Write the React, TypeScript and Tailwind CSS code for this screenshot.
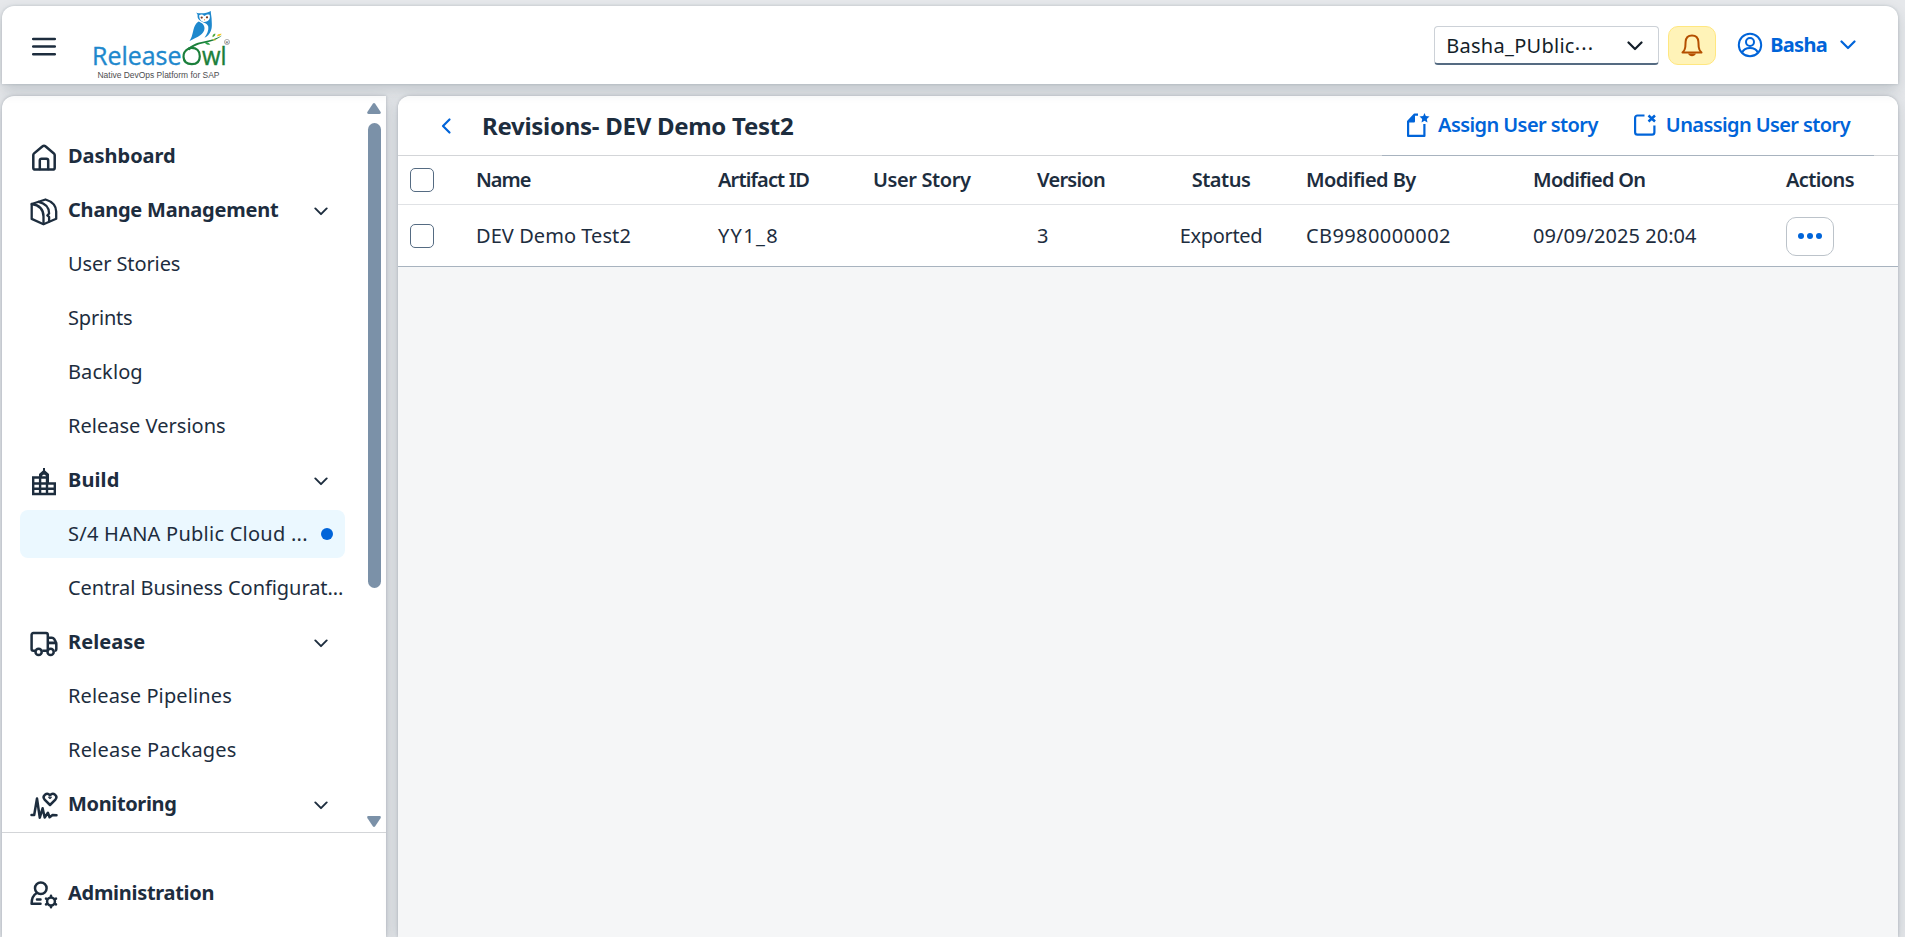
import type { ReactNode } from "react";

function Chevron({ className }: { className: string }) {
  return (
    <svg viewBox="0 0 16 10" fill="none" stroke="currentColor" strokeWidth="2.2" strokeLinecap="round" strokeLinejoin="round" className={className}>
      <path d="M1.5 1.5 8 8l6.500-6.500" />
    </svg>
  );
}

function Logo() {
  return (
    <svg width="144" height="72" viewBox="88 8 144 72" className="ml-8 shrink-0">
      <g fontFamily="'Open Sans', 'Noto Sans', sans-serif">
        <text x="92" y="64" fontSize="25" textLength="89.5" lengthAdjust="spacingAndGlyphs" fill="#1e88cd" stroke="#1e88cd" strokeWidth="0.35">Release</text>
        <text x="202" y="64" fontSize="25" textLength="24.500" lengthAdjust="spacingAndGlyphs" fill="#1b7f3b" stroke="#1b7f3b" strokeWidth="0.4">wl</text>
      </g>
      <path d="M188.5 47.6c-3.6 2-5.2 4.7-5 8.3.3 4.700 3.300 7.300 8.300 7.300 5.200 0 8-3 8-8 0-5.300-3.200-8.300-8.200-8.300-1.400 0-2.400.3-3.200.7z" fill="none" stroke="#1b7f3b" strokeWidth="2.200" />
      <path d="M187 48.500c4-4.500 9-6.600 15.500-7.800 8-1.500 14-3.200 19.500-6.200-5 4.400-11 6.300-18.500 7.800-6 1.200-10 3-14 7z" fill="#1b7f3b" />
      <path d="M204.500 41.200c2.400-.4 4.300.5 5.800 2.500-2.500.5-4.400-.4-5.800-2.500z" fill="#2aa04a" />
      <path d="M212.500 36.200c-.2-1.800.7-3 2.800-3.600.3 1.800-.6 3.200-2.800 3.600z" fill="#4aa83c" />
      <path d="M217 35.200c.4-1.800 2-2.600 4.600-2.400-.7 1.800-2.300 2.700-4.600 2.400zM212.500 38.600c1-.6 2.200-.6 3.400.3-1.200.8-2.500.7-3.400-.3z" fill="#f0c828" />
      <path d="M196 11.400c3.600 1.500 10.500 1.200 14.800-1.400-.1 2.600.7 5 .8 7.500.2 5.500.8 8.500-.8 12.500-1.300 3.300-3.700 5.500-6.300 6.800 2.600-3.500 4.300-7.500 3.800-11-.3-2.200-2-3.400-4.800-4.400-4.100-1.500-6.300-3.600-5.900-6.800.1-1.200-.5-2.300-1.600-3.200z" fill="#1e88cd" />
      <path d="M199.200 14.200c1.800-1.100 3.800-.9 5.200.9 1.500-1.600 3.400-2 5.200-1.300.9 3.300-.4 6.200-3.600 7-3.800.8-7-1.700-6.800-6.600z" fill="#fff" />
      <circle cx="201.700" cy="16.600" r="1.150" fill="#7a3a22" />
      <circle cx="207" cy="16.300" r="1.150" fill="#7a3a22" />
      <path d="M203.800 18.200h1.400l-.7 1.600z" fill="#e08a2a" />
      <path d="M198.500 20.400c3.600 1.300 6 3.400 6 6.800 0 5.600-6.500 8.800-15 12.700 2-2.600 2.600-5.400 3.500-9.100 1-4.300 2-8 5.500-10.400z" fill="#1e88cd" />
      <circle cx="227" cy="41" r="2.600" fill="none" stroke="#666" strokeWidth="0.500" />
      <text x="225.500" y="42.700" fontSize="4.400" fontFamily="'Liberation Sans', sans-serif" fill="#555">R</text>
      <text x="97.500" y="77" fontSize="8.300" textLength="122" lengthAdjust="spacingAndGlyphs" fontFamily="'Liberation Sans', Arial, sans-serif" fill="#4d4d4f">Native DevOps Platform for SAP</text>
    </svg>
  );
}

const iconClass = "w-7 h-7 shrink-0";

function HomeIcon() {
  return (
    <svg viewBox="0 0 28 28" fill="none" stroke="currentColor" strokeWidth="2.500" strokeLinejoin="round" strokeLinecap="round" className={iconClass}>
      <path d="M12.600 2.300 4.100 9.400c-.5.400-.8 1-.8 1.700V23.700c0 1.100.8 1.900 1.900 1.900h17.600c1.100 0 1.900-.8 1.900-1.900V11.100c0-.7-.3-1.300-.8-1.700l-8.500-7.100c-.8-.7-2-.7-2.800 0z" />
      <path d="M9.800 25v-8.600c0-1 .7-1.700 1.700-1.700h5c1 0 1.700.7 1.700 1.700V25" />
    </svg>
  );
}

function BoxesIcon() {
  return (
    <svg viewBox="0 0 28 28" fill="none" stroke="currentColor" strokeWidth="2.300" strokeLinejoin="round" strokeLinecap="round" className={iconClass}>
      <path d="M1.700 6 15.500 1.500c5.500 1.700 10.500 5 10.700 12v7.300L13.500 26.200 1.700 20.900z" />
      <path d="M1.700 6c6.500 1 11.800 4.500 11.800 12.500v7.500" />
      <path d="M8.500 3.900c6 1.300 10.500 5 10.600 11.500l-1.800 2 1.800 1.500v4.500" />
    </svg>
  );
}

function BuildingIcon() {
  return (
    <svg viewBox="0 0 28 28" fill="none" stroke="currentColor" strokeWidth="2.400" className={iconClass}>
      <path d="M3.200 26.700V9.500H17v17.200M17 15.500h7.800v11.200M2 26h24M3 15.500h14M3 20.800h22M10.100 9.500V26" />
      <path d="M9 9.500V6L13 2.500V-.5h2v3L19 6v9h-2V9.500z" fill="currentColor" stroke="none" />
      <path d="M12 8.300c0-2.200 4-2.200 4 0z" fill="#fff" stroke="none" />
    </svg>
  );
}

function TruckIcon() {
  return (
    <svg viewBox="0 0 28 28" fill="none" stroke="currentColor" strokeWidth="2.500" strokeLinejoin="round" className={iconClass}>
      <path d="M5 20.700H3.300c-1 0-1.700-.7-1.700-1.700V4.800c0-1 .7-1.700 1.700-1.700h12.800c1 0 1.700.7 1.700 1.700v15.200M12.300 20.700h4.700" />
      <path d="M17.800 7.700h4.100c1 0 1.700.4 2.200 1.200l1.800 3.200c.3.500.4 1 .4 1.600v5.300c0 1-.7 1.700-1.700 1.700" />
      <path d="M18.500 12.900h7.500" strokeWidth="2.800" />
      <circle cx="8.600" cy="21.900" r="3.100" />
      <circle cx="20.600" cy="21.900" r="3.100" />
    </svg>
  );
}

function MonitorIcon() {
  return (
    <svg viewBox="0 0 28 28" fill="none" stroke="currentColor" strokeWidth="2.500" strokeLinejoin="round" strokeLinecap="round" className={iconClass}>
      <path d="M1.500 23H4.200L7 6.500l2.800 19.200 2.800-9.400 2.100 9.200 3.200-4.700 1.700 4.500 3-2.300 3.900.2" />
      <path d="M20 13 14.600 7.600c-3-3.800 2.200-8 5.400-4.200 3.200-3.800 8.400.4 5.400 4.200z" />
      <path d="M18.800 5.300 20 6.400l1.200-1.100" strokeWidth="1.300" />
    </svg>
  );
}

function AdminIcon() {
  return (
    <svg viewBox="0 0 28 28" fill="none" stroke="currentColor" strokeWidth="2.500" strokeLinejoin="round" strokeLinecap="round" className={iconClass}>
      <circle cx="10.800" cy="7.300" r="5.800" />
      <path d="M6.800 12C3.500 13.900 1.600 17.200 1.600 22.700h8.900M7 18.500h3.500" />
      <circle cx="21" cy="20.500" r="3.900" />
      <path d="M21 14.800v1M21 25.200v1M16 17.600l.9.500M25.100 22.900l.9.500M16 23.400l.9-.5M25.100 18.100l.9-.5" />
    </svg>
  );
}

function NavHeader({ icon, label, track, arrow = true }: { icon: ReactNode; label: string; track: string; arrow?: boolean }) {
  return (
    <div className="flex h-12 items-center pl-[10px] pr-[17px]">
      <span className="mr-[10px] mt-[3px] flex">{icon}</span>
      <span className={`grow font-bold ${track}`}>{label}</span>
      {arrow && <Chevron className="mt-[2px] h-[9px] w-[14px]" />}
    </div>
  );
}

function NavItem({ label, track, selected = false }: { label: string; track: string; selected?: boolean }) {
  return (
    <div className={`flex h-12 items-center whitespace-nowrap rounded-lg pl-[48px] pr-3 ${selected ? "bg-[#ebf8ff]" : ""}`}>
      <span className={`grow ${track}`}>{label}</span>
      {selected && <span className="h-3 w-3 shrink-0 rounded-full bg-[#0064d9]" />}
    </div>
  );
}

function Sidebar() {
  return (
    <aside className="flex w-[384px] flex-col rounded-tl-xl bg-white shadow-[0_0_3px_rgba(34,53,72,0.25),0_4px_16px_rgba(34,53,72,0.18)]">
      <div className="flex h-[737px] border-b border-[#d3d5d8]">
        <nav className="flex w-[343px] flex-col gap-[6px] overflow-hidden pl-[18px] pt-9">
          <NavHeader icon={<HomeIcon />} label="Dashboard" track="tracking-[-0.03px]" arrow={false} />
          <NavHeader icon={<BoxesIcon />} label="Change Management" track="tracking-[-0.22px]" />
          <NavItem label="User Stories" track="tracking-[-0.1px]" />
          <NavItem label="Sprints" track="tracking-[-0.2px]" />
          <NavItem label="Backlog" track="tracking-[0.1px]" />
          <NavItem label="Release Versions" track="tracking-[0.02px]" />
          <NavHeader icon={<BuildingIcon />} label="Build" track="tracking-[0.1px]" />
          <NavItem label="S/4 HANA Public Cloud ..." track="tracking-[0.25px]" selected />
          <NavItem label="Central Business Configurat..." track="tracking-[-0.06px]" />
          <NavHeader icon={<TruckIcon />} label="Release" track="tracking-[0.06px]" />
          <NavItem label="Release Pipelines" track="tracking-[0.12px]" />
          <NavItem label="Release Packages" track="tracking-[0.2px]" />
          <NavHeader icon={<MonitorIcon />} label="Monitoring" track="tracking-[-0.36px]" />
        </nav>
        <div className="ml-auto flex w-[21px] flex-col items-center pr-[3px] pt-[7px]">
          <svg width="14" height="11" viewBox="0 0 14 11" fill="#7b91a8"><path d="M5.800.8c.7-1 1.700-1 2.400 0l5.300 8c.7 1.200.2 2.200-1 2.200h-11c-1.200 0-1.700-1-1-2.200z" /></svg>
          <div className="mt-[9px] h-[465px] w-[13px] rounded-full bg-[#7b91a8]" />
          <svg width="14" height="11" viewBox="0 0 14 11" fill="#7b91a8" className="mb-[5px] mt-auto"><path d="M5.800 10.200c.7 1 1.700 1 2.400 0l5.300-8c.7-1.200.2-2.200-1-2.200h-11c-1.200 0-1.700 1-1 2.200z" /></svg>
        </div>
      </div>
      <div className="pl-[18px] pt-9">
        <NavHeader icon={<AdminIcon />} label="Administration" track="tracking-[-0.3px]" arrow={false} />
      </div>
    </aside>
  );
}

function BellIcon() {
  return (
    <svg width="24" height="24" viewBox="0 0 24 24" fill="none" stroke="currentColor" strokeWidth="2" strokeLinejoin="round" strokeLinecap="round">
      <path d="M2.500 19.500c1.800-1.700 2.600-3 2.800-5.500l.3-5.200C5.900 4.600 8.200 2.500 12 2.500s6.100 2.100 6.400 6.300l.3 5.200c.2 2.500 1 3.800 2.800 5.500z" />
      <path d="M8 20.500c.8 2 2.200 2.700 4 2.700s3.200-.7 4-2.700z" fill="currentColor" stroke="none" />
    </svg>
  );
}

function UserIcon() {
  return (
    <svg width="26" height="26" viewBox="0 0 26 26" fill="none" stroke="currentColor" strokeWidth="2">
      <circle cx="13" cy="13" r="11.200" />
      <circle cx="13" cy="10" r="4" />
      <path d="M5.200 20.500c1.300-3 4-4.500 7.800-4.500s6.500 1.500 7.800 4.500" />
    </svg>
  );
}

function AssignIcon() {
  return (
    <svg width="24" height="26" viewBox="0 0 24 26" fill="none" stroke="currentColor" strokeWidth="2.200">
      <path d="M12 2.600H8.600L2.100 9.500V23.900h16.300v-12" strokeLinejoin="round" />
      <path d="M2 10.500 9 2.500V9c0 1-.5 1.500-1.500 1.500z" fill="currentColor" stroke="none" />
      <path d="m18.500 1 1.300 3 3.700.4-2.700 2.500.7 3.600-3-1.800-3 1.800.7-3.600-2.700-2.500 3.700-.4z" fill="currentColor" stroke="none" />
    </svg>
  );
}

function UnassignIcon() {
  return (
    <svg width="24" height="26" viewBox="0 0 24 26" fill="none" stroke="currentColor" strokeWidth="2.200" className="ml-[35px]">
      <path d="M11.500 3.500H4.500c-1.400 0-2.400 1-2.400 2.400v14.400c0 1.400 1 2.400 2.400 2.400H19c1.400 0 2.400-1 2.400-2.400V13.500" />
      <path d="m15.500 3.500 6.500 6M22 3.500l-6.500 6" strokeWidth="2.500" />
    </svg>
  );
}

function Header() {
  return (
    <header className="relative mx-[2px] flex h-[78px] w-[1896px] shrink-0 items-center rounded-t-xl bg-white pl-[30px] shadow-[0_0_3px_rgba(34,53,72,0.2),0_6px_14px_rgba(34,53,72,0.18)]">
      <svg width="24" height="20" viewBox="0 0 24 20" stroke="#1d2d3e" strokeWidth="2.500" strokeLinecap="round" className="mt-1 shrink-0"><path d="M1.200 2h21.600M1.200 9.500h21.600M1.200 17.200h21.600" /></svg>
      <Logo />
      <div className="ml-auto flex items-center pr-[42px]">
        <div className="flex h-[39px] w-[225px] items-center justify-between rounded border border-[#ccd1d7] border-b-2 border-b-[#556b82] pl-[11px] pr-[15px] text-[#131e29]">
          <span className="pt-[2px] tracking-[0.28px]">Basha_PUblic<span className="inline-block -translate-y-[3px] tracking-[1.2px]">...</span></span>
          <Chevron className="mt-[3px] h-[10px] w-4" />
        </div>
        <div className="ml-[9px] flex h-[39px] w-12 items-center justify-center rounded-[10px] border border-[#ffe780] bg-[#fff3b8] text-[#b44f00]">
          <BellIcon />
        </div>
        <div className="ml-[21px] flex items-center text-[#0064d9]">
          <UserIcon />
          <span className="ml-[7px] font-bold tracking-[-0.7px]">Basha</span>
          <Chevron className="ml-[13px] h-[10px] w-4" />
        </div>
      </div>
    </header>
  );
}

const cols = "grid grid-cols-[78px_242px_156px_163px_126px_143px_228px_252px_1fr] items-center";
const box = "ml-3 h-6 w-6 rounded-[5px] border border-[#556b82] bg-white";

export default function App() {
  return (
    <div className="flex h-[937px] w-full flex-col overflow-hidden bg-[#e6e8eb] pt-[6px] font-['Noto_Sans',sans-serif] text-[20px] leading-6 text-[#1d2d3e]">
      <Header />
      <div className="flex min-h-0 grow gap-3 pl-[2px] pt-3">
        <Sidebar />
        <main className="flex w-[1500px] flex-col rounded-t-xl bg-[#f5f6f7] shadow-[0_0_3px_rgba(34,53,72,0.25),0_4px_16px_rgba(34,53,72,0.18)]">
          <div className="flex h-[60px] rounded-t-xl border-b border-[#d3d5d8] bg-white">
            <div className="flex items-center pl-[42px]">
              <svg width="12" height="18" viewBox="0 0 12 18" fill="none" stroke="#0064d9" strokeWidth="2.200" strokeLinecap="round" strokeLinejoin="round"><path d="M9.500 2.500 3 9l6.500 6.500" /></svg>
              <h1 className="ml-[30px] text-2xl font-bold tracking-[-0.28px]">Revisions- DEV Demo Test2</h1>
            </div>
            <div className="-mb-px ml-auto mr-6 flex w-[492px] items-center justify-end border-b border-[#a8b3bf] pb-[2px] pr-6 font-semibold text-[#0064d9]">
              <AssignIcon />
              <span className="ml-2 tracking-[-0.58px]">Assign User story</span>
              <UnassignIcon />
              <span className="ml-[9px] tracking-[-0.6px]">Unassign User story</span>
            </div>
          </div>
          <div className={`${cols} h-[49px] border-b border-[#e0e2e5] bg-white font-semibold`}>
            <span className={box} />
            <span className="tracking-[-1px]">Name</span>
            <span className="tracking-[-0.85px]">Artifact ID</span>
            <span className="-ml-px tracking-[-0.4px]">User Story</span>
            <span className="tracking-[-0.75px]">Version</span>
            <span className="-ml-[2px] w-[120px] text-center tracking-[-0.5px]">Status</span>
            <span className="tracking-[-0.55px]">Modified By</span>
            <span className="-ml-px tracking-[-0.7px]">Modified On</span>
            <span className="tracking-[-0.6px]">Actions</span>
          </div>
          <div className={`${cols} h-[62px] border-b border-[#a8b3bf] bg-white`}>
            <span className={box} />
            <span className="tracking-[0.06px]">DEV Demo Test2</span>
            <span className="tracking-[1.3px]">YY1_8</span>
            <span />
            <span>3</span>
            <span className="-ml-[2px] w-[120px] text-center tracking-[-0.35px]">Exported</span>
            <span className="tracking-[0.4px]">CB9980000002</span>
            <span className="-ml-px tracking-[0.05px]">09/09/2025 20:04</span>
            <span className="mt-px flex h-[39px] w-12 items-center justify-center gap-[3px] rounded-[10px] border border-[#bcc3ca]">
              <i className="h-[6px] w-[6px] rounded-full bg-[#0064d9]" />
              <i className="h-[6px] w-[6px] rounded-full bg-[#0064d9]" />
              <i className="h-[6px] w-[6px] rounded-full bg-[#0064d9]" />
            </span>
          </div>
        </main>
      </div>
    </div>
  );
}
